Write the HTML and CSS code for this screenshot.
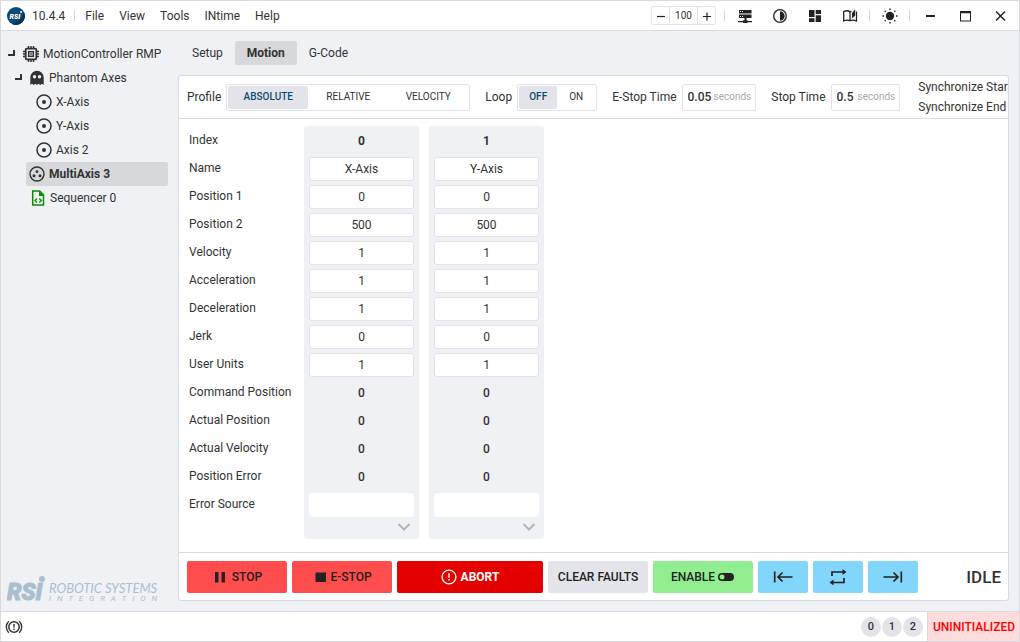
FILE: index.html
```html
<!DOCTYPE html>
<html lang="en">
<head>
<meta charset="utf-8">
<title>Motion</title>
<link rel="stylesheet" href="styles.css">
</head>
<body>
<div class="window">
  <header class="titlebar">
    <svg class="app-logo" viewBox="0 0 18 18" aria-hidden="true">
      <circle cx="9" cy="9" r="9" fill="#0c4a73"/>
      <path d="M18 9A9 9 0 0 1 5 17C12 15 16 10 17 5Z" fill="#083452"/>
      <text x="2.5" y="12" class="app-logo-text">RSI</text>
      <circle cx="14" cy="5" r="1" fill="#fff"/>
    </svg>
    <span class="version">10.4.4</span>
    <span class="divider"></span>
    <nav class="menu">
      <a href="#">File</a><a href="#">View</a><a href="#">Tools</a><a href="#">INtime</a><a href="#">Help</a>
    </nav>
    <div class="zoom">
      <button type="button" aria-label="Zoom out"><svg viewBox="0 0 10 10"><path d="M1 5.500h8" stroke="#222" stroke-width="1.200"/></svg></button>
      <input type="text" value="100" aria-label="Zoom level">
      <button type="button" aria-label="Zoom in"><svg viewBox="0 0 10 10"><path d="M1 5.500h8M5 1.500v8" stroke="#222" stroke-width="1.200"/></svg></button>
    </div>
    <span class="divider"></span>
    <button type="button" class="tool" aria-label="Network"><svg viewBox="0 0 16 16"><path fill="#222" fill-rule="evenodd" d="M2 2h12.500v3.500H2zM3 3v1h1V3zM5 3v1h1V3zM2 6.500h12.500V10H2zM3 8v1h1V8zM5 8v1h1V8zM7.500 10h2v2.300h-2zM1 13h5v-.7h4.500v.7H15v1.200h-4.500v.8H6v-.8H1z"/></svg></button>
    <button type="button" class="tool" aria-label="Contrast"><svg viewBox="0 0 16 16"><circle cx="8" cy="8" r="6.300" fill="none" stroke="#222" stroke-width="1.300"/><path fill="#222" d="M8 3.300a4.700 4.700 0 0 1 0 9.400z"/></svg></button>
    <button type="button" class="tool" aria-label="Dashboard"><svg viewBox="0 0 16 16"><path fill="#222" d="M2 2h5.500v7H2zM8.700 2H14v4H8.700zM2 10.200h5.500V14H2zM8.700 7.200H14V14H8.700z"/></svg></button>
    <button type="button" class="tool" aria-label="Manual"><svg viewBox="0 0 16 16"><path fill="none" stroke="#222" stroke-width="1.300" d="M8 12.700V3.800C6.500 2.700 3.500 2.700 1.700 3.600V13C3.500 12 6.500 12 8 12.700C9.500 12 12.500 12 14.500 13V3.500M8 3.800l1.500-.7"/><path fill="#222" d="M10 5l3.200-3.800V7.500L10 10.500z"/></svg></button>
    <span class="divider"></span>
    <button type="button" class="tool" aria-label="Theme"><svg viewBox="0 0 16 16"><circle cx="8" cy="8" r="4.200" fill="#222"/><path stroke="#222" stroke-width="1.400" d="M8 .5v1.500M8 14v1.500M.5 8H2M14 8h1.500M2.700 2.700l1 1M12.300 12.300l1 1M2.700 13.300l1-1M12.300 3.700l1-1"/></svg></button>
    <span class="divider"></span>
    <button type="button" class="tool" aria-label="Minimize"><svg viewBox="0 0 16 16"><path fill="#222" d="M4 7h9v2H4z"/></svg></button>
    <button type="button" class="tool" aria-label="Maximize"><svg viewBox="0 0 16 16"><path fill="#222" fill-rule="evenodd" d="M3 3h11v10.500H3zM4 5.300v7.200h9V5.300z"/></svg></button>
    <button type="button" class="tool" aria-label="Close"><svg viewBox="0 0 16 16"><path stroke="#222" stroke-width="1.500" d="M4 3.500l9 9M13 3.500l-9 9"/></svg></button>
  </header>

  <div class="body">
    <aside class="sidebar">
      <ul class="tree">
        <li class="node level-1">
          <svg class="arrow" viewBox="0 0 8 8"><path d="M6 0v5H0" fill="none" stroke="#333" stroke-width="2"/></svg>
          <svg class="icon" viewBox="0 0 16 16"><rect x="2.700" y="2.700" width="10.600" height="10.600" rx="1" fill="none" stroke="#333" stroke-width="1.800"/><path stroke="#333" stroke-width="1.500" d="M5.500 0v3M8 0v3M10.500 0v3M5.500 13v3M8 13v3M10.500 13v3M0 5.500h3M0 8h3M0 10.500h3M13 5.500h3M13 8h3M13 10.500h3"/><rect x="5.700" y="5.700" width="4.600" height="4.600" fill="none" stroke="#333" stroke-width="1.500"/><path fill="#333" d="M7.200 7.200h1.600v1.600H7.200z"/></svg>
          <span>MotionController RMP</span>
        </li>
        <li class="node level-2">
          <svg class="arrow" viewBox="0 0 8 8"><path d="M6 0v5H0" fill="none" stroke="#333" stroke-width="2"/></svg>
          <svg class="icon" viewBox="0 0 16 16"><path fill="#333" fill-rule="evenodd" d="M1.300 15V7.500a6.700 6.700 0 0 1 13.400 0V15l-1.700-1.300L11.300 15l-1.700-1.300L8 15l-1.600-1.300L4.700 15 3 13.700zM5.500 5a1.700 1.700 0 1 0 .01 3.400a1.700 1.700 0 0 0 0-3.400zM10.500 5a1.700 1.700 0 1 0 .01 3.400a1.700 1.700 0 0 0 0-3.400z"/></svg>
          <span>Phantom Axes</span>
        </li>
        <li class="node level-3"><svg class="icon" viewBox="0 0 16 16"><circle cx="8" cy="8" r="7" fill="none" stroke="#333" stroke-width="1.500"/><circle cx="8" cy="8" r="2" fill="#333"/></svg><span>X-Axis</span></li>
        <li class="node level-3"><svg class="icon" viewBox="0 0 16 16"><circle cx="8" cy="8" r="7" fill="none" stroke="#333" stroke-width="1.500"/><circle cx="8" cy="8" r="2" fill="#333"/></svg><span>Y-Axis</span></li>
        <li class="node level-3"><svg class="icon" viewBox="0 0 16 16"><circle cx="8" cy="8" r="7" fill="none" stroke="#333" stroke-width="1.500"/><circle cx="8" cy="8" r="2" fill="#333"/></svg><span>Axis 2</span></li>
        <li class="node selected"><svg class="icon" viewBox="0 0 16 16"><circle cx="8" cy="8" r="7" fill="none" stroke="#333" stroke-width="1.400"/><circle cx="8" cy="5.700" r="1.400" fill="#333"/><circle cx="5" cy="9.700" r="1.500" fill="#333"/><circle cx="11" cy="9.700" r="1.500" fill="#333"/></svg><span>MultiAxis 3</span></li>
        <li class="node file"><svg class="icon" viewBox="0 0 16 16"><path fill="none" stroke="#0a8a0a" stroke-width="1.500" d="M2.700 1h7l3.800 3.800V15H2.700z"/><path fill="#0a8a0a" d="M9 1l5 5H9z"/><path fill="none" stroke="#0a8a0a" stroke-width="1.300" d="M7 8.500L5 10.500l2 2M9.300 8.500l2 2-2 2"/></svg><span>Sequencer 0</span></li>
      </ul>
      <div class="brand">
        <svg class="brand-mark" viewBox="0 0 40 28" aria-hidden="true"><text x="0" y="25" class="brand-mark-text">RSI</text><circle cx="35" cy="4" r="3" fill="#a9bfcf"/></svg>
        <div class="brand-name"><span class="brand-top">ROBOTIC SYSTEMS</span><span class="brand-sub"><i>I</i><i>N</i><i>T</i><i>E</i><i>G</i><i>R</i><i>A</i><i>T</i><i>I</i><i>O</i><i>N</i></span></div>
      </div>
    </aside>

    <main class="main">
      <nav class="tabs">
        <a href="#">Setup</a><a href="#" class="active" aria-current="page">Motion</a><a href="#">G-Code</a>
      </nav>
      <section class="panel">
        <div class="options">
          <div class="group"><span>Profile</span>
            <div class="segmented wide" role="radiogroup" aria-label="Profile">
              <label><input type="radio" name="profile" checked><span>ABSOLUTE</span></label>
              <label><input type="radio" name="profile"><span>RELATIVE</span></label>
              <label><input type="radio" name="profile"><span>VELOCITY</span></label>
            </div>
          </div>
          <div class="group"><span>Loop</span>
            <div class="segmented" role="radiogroup" aria-label="Loop">
              <label><input type="radio" name="loop" checked><span>OFF</span></label>
              <label><input type="radio" name="loop"><span>ON</span></label>
            </div>
          </div>
          <div class="group"><label for="estop">E-Stop Time</label><div class="time"><input id="estop" class="four" type="text" value="0.05"><span>seconds</span></div></div>
          <div class="group"><label for="stop">Stop Time</label><div class="time"><input id="stop" class="three" type="text" value="0.5"><span>seconds</span></div></div>
          <div class="sync"><span>Synchronize Start</span><span>Synchronize End</span></div>
        </div>

        <div class="content">
          <table class="axes">
            <tr><th scope="row">Index</th><td><b>0</b></td><td><b>1</b></td></tr>
            <tr><th scope="row">Name</th><td><input type="text" value="X-Axis" aria-label="Name 0"></td><td><input type="text" value="Y-Axis" aria-label="Name 1"></td></tr>
            <tr><th scope="row">Position 1</th><td><input type="text" value="0" aria-label="Position 1, axis 0"></td><td><input type="text" value="0" aria-label="Position 1, axis 1"></td></tr>
            <tr><th scope="row">Position 2</th><td><input type="text" value="500" aria-label="Position 2, axis 0"></td><td><input type="text" value="500" aria-label="Position 2, axis 1"></td></tr>
            <tr><th scope="row">Velocity</th><td><input type="text" value="1" aria-label="Velocity, axis 0"></td><td><input type="text" value="1" aria-label="Velocity, axis 1"></td></tr>
            <tr><th scope="row">Acceleration</th><td><input type="text" value="1" aria-label="Acceleration, axis 0"></td><td><input type="text" value="1" aria-label="Acceleration, axis 1"></td></tr>
            <tr><th scope="row">Deceleration</th><td><input type="text" value="1" aria-label="Deceleration, axis 0"></td><td><input type="text" value="1" aria-label="Deceleration, axis 1"></td></tr>
            <tr><th scope="row">Jerk</th><td><input type="text" value="0" aria-label="Jerk, axis 0"></td><td><input type="text" value="0" aria-label="Jerk, axis 1"></td></tr>
            <tr><th scope="row">User Units</th><td><input type="text" value="1" aria-label="User Units, axis 0"></td><td><input type="text" value="1" aria-label="User Units, axis 1"></td></tr>
            <tr><th scope="row">Command Position</th><td>0</td><td>0</td></tr>
            <tr><th scope="row">Actual Position</th><td>0</td><td>0</td></tr>
            <tr><th scope="row">Actual Velocity</th><td>0</td><td>0</td></tr>
            <tr><th scope="row">Position Error</th><td>0</td><td>0</td></tr>
            <tr><th scope="row">Error Source</th><td><input class="plain" type="text" readonly aria-label="Error Source, axis 0"></td><td><input class="plain" type="text" readonly aria-label="Error Source, axis 1"></td></tr>
            <tr class="last"><th></th>
              <td><button type="button" class="expand" aria-label="Expand axis 0"><svg viewBox="0 0 14 10"><path d="M1.500 2l5.500 5.500L12.500 2" fill="none" stroke="#b3b5b9" stroke-width="2"/></svg></button></td>
              <td><button type="button" class="expand" aria-label="Expand axis 1"><svg viewBox="0 0 14 10"><path d="M1.500 2l5.500 5.500L12.500 2" fill="none" stroke="#b3b5b9" stroke-width="2"/></svg></button></td>
            </tr>
          </table>
        </div>

        <div class="actions">
          <button type="button" class="btn red"><svg viewBox="0 0 16 16"><path fill="#222" d="M3 3h3.500v10.500H3zM9.500 3H13v10.500H9.500z"/></svg>STOP</button>
          <button type="button" class="btn red tight"><svg viewBox="0 0 16 16"><path fill="#222" d="M3.500 3.500H14v9.500H3.500z"/></svg>E-STOP</button>
          <button type="button" class="btn abort"><svg viewBox="0 0 16 16"><circle cx="8" cy="8" r="6.900" fill="none" stroke="#fff" stroke-width="1.400"/><path fill="#fff" d="M7.300 4.300h1.400v4.400H7.300zM7.300 10h1.400v1.500H7.300z"/></svg>ABORT</button>
          <button type="button" class="btn gray">CLEAR FAULTS</button>
          <button type="button" class="btn green">ENABLE<svg viewBox="0 0 18 16"><path fill="#222" fill-rule="evenodd" d="M5 4h8a4 4 0 0 1 0 8H5a4 4 0 0 1 0-8zM5 5.500a2.500 2.500 0 1 0 .01 5a2.500 2.500 0 0 0 0-5z"/></svg></button>
          <button type="button" class="btn blue" aria-label="Go to start"><svg viewBox="0 0 20 16"><path d="M1.700 2.500v11M19.500 8H5M9.500 3.500L5 8l4.500 4.500" fill="none" stroke="#222" stroke-width="1.700"/></svg></button>
          <button type="button" class="btn blue" aria-label="Repeat"><svg viewBox="0 0 20 16"><path d="M4 7V3h12M16 9v4.500H4" fill="none" stroke="#222" stroke-width="1.700"/><path fill="#222" d="M14.500 0l4 3-4 3zM5.500 10.500l-4 3 4 3z"/></svg></button>
          <button type="button" class="btn blue" aria-label="Go to end"><svg viewBox="0 0 20 16"><path d="M18.300 2.500v11M.5 8H15M10.500 3.500L15 8l-4.500 4.500" fill="none" stroke="#222" stroke-width="1.700"/></svg></button>
          <span class="state">IDLE</span>
        </div>
      </section>
    </main>
  </div>

  <footer class="status">
    <button type="button" class="alert" aria-label="Alerts"><svg viewBox="0 0 18 16"><circle cx="9" cy="8" r="5.200" fill="none" stroke="#333" stroke-width="1.500"/><path fill="none" stroke="#333" stroke-width="1.400" d="M3.800 2.200a8 8 0 0 0 0 11.600M14.200 2.200a8 8 0 0 1 0 11.600"/><path fill="#333" d="M8.300 5h1.400v3.500H8.300zM8.300 9.500h1.400V11H8.300z"/></svg></button>
    <div class="counts"><span>0</span><span>1</span><span>2</span></div>
    <strong class="uninit">UNINITIALIZED</strong>
  </footer>
</div>
</body>
</html>
```
FILE: styles.css
```css
* { box-sizing: border-box; }
html, body { height: 100%; margin: 0; }
body { font: 12px/20px Roboto, "Liberation Sans", sans-serif; color: #333; }
button, input { font: inherit; color: inherit; margin: 0; padding: 0; }
button { border: 0; background: none; }
a { color: inherit; text-decoration: none; }
svg { display: block; flex: none; }

.window { display: flex; flex-direction: column; height: 100%; border: 1px solid #d9dae0; background: #f0f1f5; overflow: hidden; }

.titlebar { display: flex; align-items: center; flex: none; height: 30px; padding: 0 2px 0 6px; background: #fff; border-bottom: 1px solid #d9dae0; }
.app-logo { width: 18px; height: 18px; }
.app-logo-text { font: italic 900 7px Roboto, sans-serif; fill: #fff; }
.version { margin: 0 7px 0 7px; }
.divider { width: 1px; height: 11px; margin: 0 2px; background: #d9dae0; }
.menu { display: flex; gap: 15px; margin: 0 auto 0 8px; }
.zoom { display: flex; height: 19px; margin-right: 6px; border: 1px solid #e2e3e8; border-radius: 2px; }
.zoom button { display: grid; place-items: center; width: 17px; }
.zoom svg { width: 10px; height: 10px; }
.zoom input { width: 29px; border: solid #e2e3e8; border-width: 0 1px; text-align: center; font-size: 10px; }
.tool { display: grid; place-items: center; width: 35px; height: 28px; }
.tool svg { width: 16px; height: 16px; }

.body { display: flex; flex: 1; min-height: 0; }
.sidebar { display: flex; flex-direction: column; flex: none; width: 177px; }
.tree { list-style: none; margin: 11px 10px auto 0; padding: 0; }
.node { display: flex; align-items: center; gap: 4px; height: 24px; }
.icon { width: 16px; height: 16px; }
.arrow { width: 8px; height: 8px; }
.level-1 { padding-left: 7px; }
.level-1 .arrow { margin-right: 3px; }
.level-2 { padding-left: 14px; }
.level-2 .arrow { margin-right: 2px; }
.level-3 { padding-left: 35px; }
.selected { margin-left: 25px; padding-left: 3px; background: #d7d8db; border-radius: 2px; font-weight: 700; }
.file { padding-left: 29px; }
.brand { display: flex; align-items: flex-end; gap: 2px; padding: 0 0 8px 6px; color: #a9bfcf; }
.brand-mark { width: 40px; height: 28px; }
.brand-mark-text { font: italic 900 23px Roboto, sans-serif; fill: #a9bfcf; stroke: #a9bfcf; }
.brand-name { display: flex; flex-direction: column; width: 108px; font-style: italic; }
.brand-top { font: italic 13px/13px Lato, Roboto, sans-serif; white-space: nowrap; }
.brand-sub { display: flex; justify-content: space-between; font-size: 8px; line-height: 8px; }

.main { display: flex; flex-direction: column; flex: 1; min-width: 0; padding: 10px 10px 10px 0; }
.tabs { display: flex; margin-bottom: 10px; padding-left: 2px; }
.tabs a { padding: 2px 12px; border-radius: 2px; }
.tabs .active { background: #d7d8db; font-weight: 700; }
.panel { display: flex; flex-direction: column; flex: 1; min-height: 0; background: #fff; border: 1px solid #d9dae0; border-radius: 3px; overflow: hidden; }

.options { display: flex; align-items: center; flex: none; gap: 15px; height: 43px; padding-left: 8px; border-bottom: 1px solid #d9dae0; white-space: nowrap; overflow: hidden; }
.group { display: flex; align-items: center; flex: none; gap: 5px; }
.segmented { display: flex; height: 27px; padding: 1px; border: 1px solid #e2e3e8; border-radius: 2px; font-size: 10px; }
.segmented label { display: grid; width: 38px; }
.segmented.wide label { width: 80px; }
.segmented input { appearance: none; grid-area: 1 / 1; }
.segmented span { grid-area: 1 / 1; display: grid; place-items: center; border-radius: 2px; }
.segmented :checked + span { background: #e3e4e9; color: #0c4a73; font-weight: 500; }
.time { display: flex; align-items: center; height: 27px; padding: 0 4px 0 5px; border: 1px solid #e2e3e8; border-radius: 2px; }
.time input { border: 0; background: none; font-weight: 500; }
.time .four { width: 26px; }
.time .three { width: 21px; }
.time span { font-size: 10px; color: #aaabad; }
.sync { display: flex; flex-direction: column; margin-left: 3px; }

.content { flex: 1; min-height: 0; padding: 7px 0 0; overflow: auto; }
.axes { border-collapse: separate; border-spacing: 10px 0; }
.axes th { width: 105px; height: 28px; padding: 0; text-align: left; font-weight: 400; white-space: nowrap; }
.axes td { width: 115px; height: 28px; padding: 2px 5px 0; background: #f0f1f5; text-align: center; font-weight: 500; }
.axes tr:first-child td { border-radius: 3px 3px 0 0; }
.axes .last td { height: 21px; padding-top: 0; border-radius: 0 0 3px 3px; vertical-align: top; }
.axes .last th { height: 21px; }
.axes input { display: block; width: 100%; height: 24px; border: 1px solid #e2e3e8; border-radius: 3px; background: #fff; text-align: center; font-weight: 400; }
.axes .plain { border-color: #fff; }
.expand { display: block; margin-left: auto; padding: 4px 3px 0 0; }
.expand svg { width: 14px; height: 10px; }

.actions { display: flex; align-items: center; flex: none; gap: 5px; padding: 8px 7px 7px 8px; border-top: 1px solid #d9dae0; }
.btn { display: flex; align-items: center; justify-content: center; gap: 4px; flex: none; width: 100px; height: 32px; border-radius: 2px; color: #222; font-weight: 500; white-space: nowrap; }
.btn svg { width: 16px; height: 16px; }
.red { background: #ff4d4d; }
.tight { gap: 2px; }
.abort { flex: 1; background: #e50000; color: #fff; font-weight: 700; }
.gray { background: #e3e4e9; }
.green { gap: 2px; background: #90ee90; }
.green svg { width: 18px; }
.blue { width: 50px; background: #82d5fb; }
.blue svg { width: 20px; }
.state { width: 78px; text-align: right; font-size: 17px; font-weight: 500; }

.status { display: flex; align-items: center; flex: none; height: 30px; background: #fff; border-top: 1px solid #d9dae0; }
.alert { margin: 0 auto 0 4px; }
.alert svg { width: 18px; height: 16px; }
.counts { display: flex; gap: 1px; margin-right: 4px; font-size: 11px; font-weight: 500; }
.counts span { width: 20px; height: 20px; border-radius: 50%; background: #e3e4e9; text-align: center; }
.uninit { display: grid; place-items: center; align-self: stretch; padding: 0 4px 0 5px; border-left: 1px solid #d9dae0; background: #ffdcdc; color: #f00; font-weight: 500; }
```
